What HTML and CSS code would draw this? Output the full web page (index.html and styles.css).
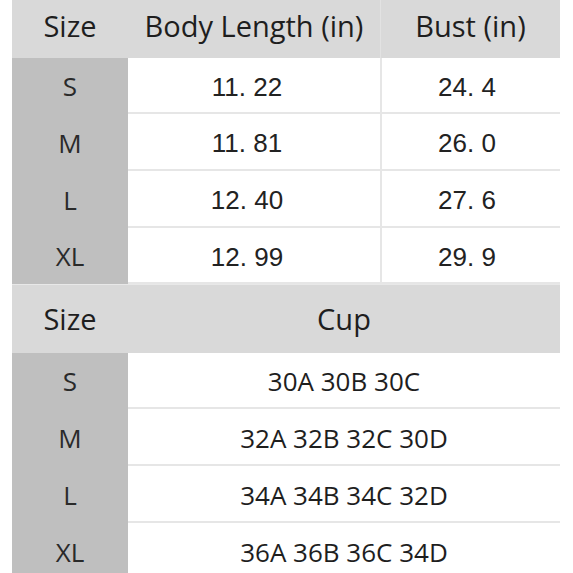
FILE: index.html
```html
<!DOCTYPE html>
<html>
<head>
<meta charset="utf-8">
<link rel="stylesheet" href="styles.css">
</head>
<body>
<div class="sheet">
  <div class="grid g3">
    <div class="cell head">Size</div>
    <div class="cell head">Body Length (in)</div>
    <div class="cell head sep">Bust (in)</div>

    <div class="cell size">S</div>
    <div class="cell num">11. 22</div>
    <div class="cell num sep">24. 4</div>

    <div class="cell size">M</div>
    <div class="cell num">11. 81</div>
    <div class="cell num sep">26. 0</div>

    <div class="cell size">L</div>
    <div class="cell num">12. 40</div>
    <div class="cell num sep">27. 6</div>

    <div class="cell size">XL</div>
    <div class="cell num">12. 99</div>
    <div class="cell num sep">29. 9</div>
  </div>
  <div class="grid g2">
    <div class="cell head tall">Size</div>
    <div class="cell head tall">Cup</div>

    <div class="cell size">S</div>
    <div class="cell cup">30A 30B 30C</div>

    <div class="cell size">M</div>
    <div class="cell cup">32A 32B 32C 30D</div>

    <div class="cell size">L</div>
    <div class="cell cup">34A 34B 34C 32D</div>

    <div class="cell size">XL</div>
    <div class="cell cup">36A 36B 36C 34D</div>
  </div>
</div>
</body>
</html>
```
FILE: styles.css
```css
html, body {
  margin: 0;
  padding: 0;
  background: #fff;
  overflow: hidden;
}
.sheet {
  width: 548px;
  margin-left: 12px;
  height: 573px;
  overflow: hidden;
}
.grid {
  display: grid;
}
.g3 {
  grid-template-columns: 116px 252px 180px;
  grid-template-rows: 58px 56px 57px 57px 56px;
}
.g2 {
  grid-template-columns: 116px 432px;
  grid-template-rows: 69px 56px 57px 57px 57px;
}
.cell {
  display: flex;
  align-items: center;
  justify-content: center;
  box-sizing: border-box;
  font-family: "Open Sans", Lato, sans-serif;
  color: #1e1e1e;
}
.head {
  background: #d9d9d9;
  font-size: 29px;
  padding-bottom: 8px;
}
.head.tall {
  padding-bottom: 2px;
}
.g2 .head {
  border-top: 1px solid #e8e8e8;
}
.head.sep {
  border-left: 1px solid #e2e2e2;
}
.size {
  background: #bfbfbf;
  font-size: 26px;
  color: #2a2a2a;
}
.num, .cup {
  background: #fff;
  border-bottom: 2px solid #e6e6e6;
}
.num {
  font-family: "Liberation Sans", Arial, sans-serif;
  font-size: 26px;
  color: #222;
  padding-top: 4px;
  padding-right: 14px;
}
.num.sep {
  border-left: 2px solid #e6e6e6;
  padding-right: 8px;
}
.cup {
  font-size: 26px;
  padding-top: 2px;
}
```
